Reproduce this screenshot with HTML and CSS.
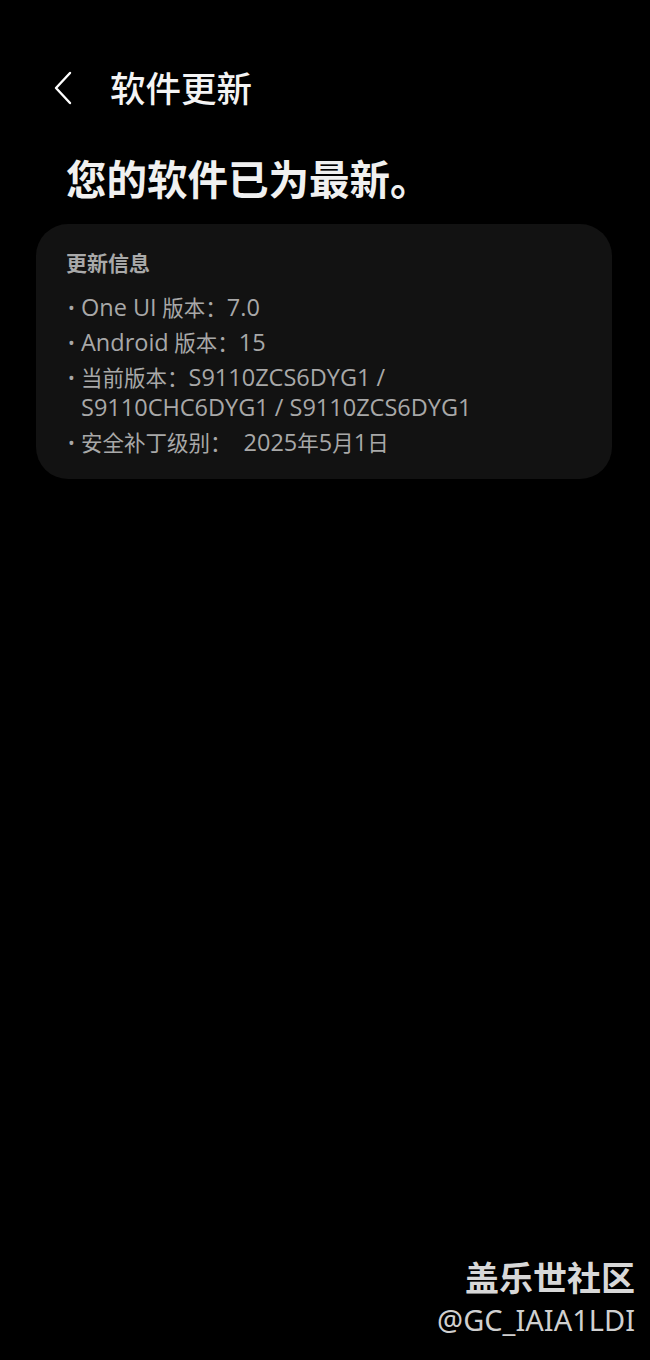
FILE: index.html
```html
<!DOCTYPE html>
<html lang="zh-CN">
<head>
    <meta charset="utf-8">
    <title>软件更新</title>
    <link rel="stylesheet" href="styles.css">
</head>
<body>
<div class="screen">
    <div class="appbar">
        <span class="back">
            <svg width="22" height="36" viewBox="0 0 22 36"><path d="M18 3 L4 18 L18 33" fill="none" stroke="#ffffff" stroke-width="2.4" stroke-linecap="round" stroke-linejoin="round"/></svg>
        </span>
        <span class="title">软件更新</span>
    </div>
    <h1 class="status">您的软件已为最新。</h1>
    <div class="card">
        <div class="card-title">更新信息</div>
        <ul class="info">
            <li><span class="dot">•</span><span><span class="lat">One UI</span> 版本：<span class="lat">7.0</span></span></li>
            <li><span class="dot">•</span><span><span class="lat">Android</span> 版本：<span class="lat">15</span></span></li>
            <li><span class="dot">•</span><span>当前版本：<span class="lat">S9110ZCS6DYG1 /<br>S9110CHC6DYG1 / S9110ZCS6DYG1</span></span></li>
            <li><span class="dot">•</span><span>安全补丁级别：<span class="lat date">2025</span>年<span class="lat">5</span>月<span class="lat">1</span>日</span></li>
        </ul>
    </div>
    <div class="watermark">
        <div class="wm-name">盖乐世社区</div>
        <div class="wm-user">@GC_IAIA1LDI</div>
    </div>
</div>
</body>
</html>
```
FILE: styles.css
```css
html, body {
    margin: 0;
    background: #000000;
}
body {
    font-family: "Open Sans", "Noto Sans CJK SC", sans-serif;
    color: #ffffff;
}
.screen {
    position: relative;
    width: 650px;
    height: 1360px;
    overflow: hidden;
}
.appbar {
    display: flex;
    align-items: center;
    margin-top: 66px;
    padding-left: 52px;
    height: 44px;
}
.back {
    display: flex;
    width: 58px;
}
.title {
    font-size: 35.5px;
    line-height: 44px;
    font-weight: 500;
    color: #f4f4f4;
}
.status {
    margin: 45px 0 0 66px;
    font-size: 40.5px;
    line-height: 50px;
    font-weight: 700;
    color: #f0f0f0;
}
.card {
    margin: 19px 38px 0 36px;
    padding: 24px 30px 21px 30px;
    background: #121212;
    border-radius: 32px;
}
.card-title {
    font-size: 21px;
    line-height: 30px;
    font-weight: 700;
    color: #a9a9a9;
}
.info {
    list-style: none;
    margin: 15px 0 0 0;
    padding: 0;
}
.info li {
    display: flex;
    font-size: 21.5px;
    line-height: 30px;
    color: #a8a8a8;
    margin-top: 5px;
}
.info li:first-child {
    margin-top: 0;
}
.lat {
    font-size: 23.5px;
    line-height: 20px;
}
.date {
    margin-left: 12px;
}
.dot {
    width: 15px;
    flex: none;
    padding-left: 2px;
    box-sizing: border-box;
    font-size: 18px;
}
.watermark {
    position: absolute;
    right: 15px;
    top: 1256px;
    text-align: right;
}
.wm-name {
    font-size: 34px;
    line-height: 44px;
    font-weight: 700;
    color: #d8d8d8;
}
.wm-user {
    font-family: "Noto Sans", sans-serif;
    font-size: 29px;
    line-height: 40px;
    color: #d0d0d0;
}
```
